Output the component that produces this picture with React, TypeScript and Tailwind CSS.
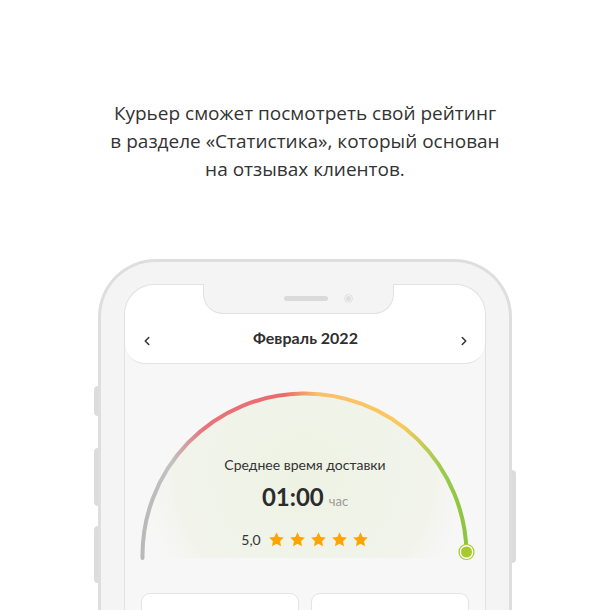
import { ChevronLeft, ChevronRight } from "lucide-react";

function Star() {
  return (
    <svg width="17" height="17" viewBox="0 0 24 24">
      <path
        d="M12 1.8l3.1 6.6 7.2.9-5.3 5 1.4 7.1L12 17.9l-6.4 3.5 1.4-7.1-5.3-5 7.2-.9z"
        fill="#ffa400"
      />
    </svg>
  );
}

function Gauge() {
  return (
    <div className="relative h-[207px]">
      <svg width="361" height="207" viewBox="0 0 361 207" className="absolute left-[-1px] top-0">
        <defs>
          <linearGradient id="arc" x1="18" y1="0" x2="343" y2="0" gradientUnits="userSpaceOnUse">
            <stop offset="0" stopColor="#b9b9b9" />
            <stop offset="0.09" stopColor="#c2c2c2" />
            <stop offset="0.19" stopColor="#e7747a" />
            <stop offset="0.44" stopColor="#ec6a6c" />
            <stop offset="0.54" stopColor="#fbbf6a" />
            <stop offset="0.8" stopColor="#f9c95e" />
            <stop offset="0.92" stopColor="#9ccb4c" />
            <stop offset="1" stopColor="#8cc43f" />
          </linearGradient>
          <radialGradient id="tint" cx="180.5" cy="110" r="175" gradientUnits="userSpaceOnUse">
            <stop offset="0" stopColor="#eef2e3" />
            <stop offset="0.75" stopColor="#f2f4ec" />
            <stop offset="1" stopColor="#f7f7f7" stopOpacity="0" />
          </radialGradient>
        </defs>
        <path d="M18.5 194 A162 162 0 0 1 342.5 194 Z" fill="url(#tint)" />
        <path
          d="M18.5 194 A162 162 0 0 1 342.5 189"
          fill="none"
          stroke="url(#arc)"
          strokeWidth="4"
          strokeLinecap="round"
        />
        <circle cx="342.5" cy="188" r="6.5" fill="#a8c92c" stroke="#ffffff" strokeWidth="2" />
        <circle cx="342.5" cy="188" r="7.5" fill="none" stroke="#a8c92c" strokeWidth="1.2" />
      </svg>
      <div className="absolute inset-x-0 top-[92px] flex flex-col items-center text-[#333]">
        <div className="text-[14px] leading-[18px]">Среднее время доставки</div>
        <div className="mt-[9px] flex items-baseline gap-[5px]">
          <span className="text-[24px] font-bold leading-[28px] text-[#2b2b2b]">01:00</span>
          <span className="text-[13px] text-[#999]">час</span>
        </div>
        <div className="mt-[17px] flex items-center gap-[4px]">
          <span className="mr-[3px] text-[14px] text-[#333]">5,0</span>
          <Star />
          <Star />
          <Star />
          <Star />
          <Star />
        </div>
      </div>
    </div>
  );
}

export default function App() {
  return (
    <div className="h-[610px] w-[610px] overflow-hidden bg-white" style={{ fontFamily: "Lato, 'Noto Sans', sans-serif" }}>
      <p
        className="pt-[99px] text-center text-[19px] leading-[28px] text-[#333]"
        style={{ fontFamily: "'Open Sans', 'DejaVu Sans', sans-serif" }}
      >
        Курьер сможет посмотреть свой рейтинг
        <br />в разделе «Статистика», который основан
        <br />на отзывах клиентов.
      </p>

      <div className="relative ml-[98px] mt-[76px] w-[414px] rounded-t-[58px] border-[3px] border-b-0 border-[#dedede] bg-[#f4f4f4] px-[23px] pt-[22px] h-[360px]">
        {/* side buttons */}
        <div className="absolute left-[-7px] top-[124px] h-[30px] w-[4px] rounded-l-sm bg-[#dcdcdc]" />
        <div className="absolute left-[-7px] top-[186px] h-[58px] w-[4px] rounded-l-sm bg-[#dcdcdc]" />
        <div className="absolute left-[-7px] top-[264px] h-[57px] w-[4px] rounded-l-sm bg-[#dcdcdc]" />
        <div className="absolute right-[-7px] top-[208px] h-[93px] w-[4px] rounded-r-sm bg-[#dcdcdc]" />

        <div className="relative h-full w-[362px] rounded-t-[30px] border border-b-0 border-[#e2e2e2] bg-[#f7f7f7]">
          {/* notch */}
          <div className="absolute left-[78px] top-[-1px] z-10 flex h-[30px] w-[191px] items-center gap-[16px] rounded-b-[20px] border border-t-0 border-[#e2e2e2] bg-[#f4f4f4] pl-[80px]">
            <div className="h-[5px] w-[44px] rounded-full bg-[#dadada]" />
            <div className="flex h-[9px] w-[9px] items-center justify-center rounded-full border border-[#e0e0e0]">
              <div className="h-[5px] w-[5px] rounded-full bg-[#dedede]" />
            </div>
          </div>

          <div className="flex h-[79px] items-end justify-between rounded-t-[30px] rounded-b-[20px] border-b border-[#e4e4e4] bg-white pl-[15px] pr-[14px] pb-[15px]">
            <ChevronLeft size={14} strokeWidth={2.6} color="#333" />
            <span className="text-[16px] font-bold leading-[20px] text-[#2f2f2f]">Февраль 2022</span>
            <ChevronRight size={14} strokeWidth={2.6} color="#333" />
          </div>

          <Gauge />

          <div className="mt-[22px] flex gap-[12px] px-[16px]">
            <div className="h-[40px] flex-1 rounded-t-[9px] border border-[#e4e4e4] bg-white" />
            <div className="h-[40px] flex-1 rounded-t-[9px] border border-[#e4e4e4] bg-white" />
          </div>
        </div>
      </div>
    </div>
  );
}
